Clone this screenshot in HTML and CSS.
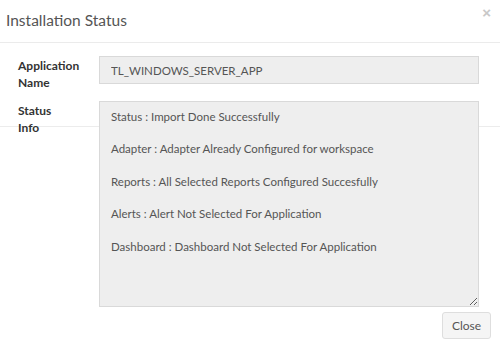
FILE: index.html
```html
<!DOCTYPE html>
<html lang="en">
<head>
    <meta charset="UTF-8">
    <meta name="viewport" content="width=device-width, initial-scale=1.0">
    <title>Installation Status</title>
    <link rel="stylesheet" href="styles.css">
</head>
<body>
    <div class="modal">
        <div class="modal-header">
            <h4 class="modal-title">Installation Status</h4>
            <button class="close" id="close">&times;</button>
        </div>
        <div class="modal-body">
            <div class="form-row">
                <label class="form-label">Application Name</label>
                <input class="form-control" type="text" value="TL_WINDOWS_SERVER_APP" readonly>
            </div>
            <div class="form-row status-row">
                <label class="form-label">Status Info</label>
                <textarea class="form-control status-info" readonly>Status : Import Done Successfully

Adapter : Adapter Already Configured for workspace

Reports : All Selected Reports Configured Succesfully

Alerts : Alert Not Selected For Application

Dashboard : Dashboard Not Selected For Application</textarea>
            </div>
        </div>
        <div class="modal-footer">
            <button class="btn" id="closeBtn">Close</button>
        </div>
    </div>
</body>
</html>
```
FILE: styles.css
```css
* {
    margin: 0;
    padding: 0;
    box-sizing: border-box;
}
body {
    background-color: #fff;
    font-family: Lato, "Open Sans", sans-serif;
    color: #333;
}
.modal {
    width: 500px;
    height: 348px;
}
.modal-header {
    height: 43px;
    display: flex;
    justify-content: space-between;
    align-items: flex-start;
    border-bottom: 1px solid #ebebeb;
    padding: 0 9px 0 6px;
}
.modal-title {
    font-size: 15.5px;
    font-weight: normal;
    color: #555;
    line-height: 20px;
    margin-top: 10px;
}
.close {
    background: none;
    border: none;
    color: #c8c8c8;
    font-size: 15px;
    font-weight: bold;
    line-height: 12px;
    margin-top: 7px;
    cursor: pointer;
    font-family: Arial, sans-serif;
}
.modal-body {
    padding: 13px 21px 0 18px;
}
.form-row {
    display: flex;
    align-items: flex-start;
}
.status-row {
    margin-top: 10px;
    background: linear-gradient(#ececec, #ececec) 0 25px / 100% 1px no-repeat;
    margin-left: -18px;
    margin-right: -21px;
    padding-left: 18px;
    padding-right: 21px;
}
.form-label {
    width: 81px;
    flex-shrink: 0;
    font-weight: bold;
    font-size: 12px;
    line-height: 17px;
    padding-top: 1px;
    padding-right: 31px;
    color: #333;
}
.form-control {
    flex: 1;
    height: 28px;
    background-color: #eee;
    border: 1px solid #d9d9d9;
    color: #555;
    font-family: Lato, "Open Sans", sans-serif;
    font-size: 11.5px;
    padding: 0 11px;
    outline: none;
}
.status-info {
    height: 206px;
    line-height: 16.2px;
    padding: 7px 11px;
    resize: vertical;
    overflow: hidden;
}
.modal-footer {
    display: flex;
    justify-content: flex-end;
    padding: 5px 9px 0 0;
}
.btn {
    width: 49px;
    height: 27px;
    background-color: #f5f5f5;
    border: 1px solid #dedede;
    border-radius: 3px;
    color: #555;
    font-family: Lato, "Open Sans", sans-serif;
    font-size: 12px;
    cursor: pointer;
}
```
